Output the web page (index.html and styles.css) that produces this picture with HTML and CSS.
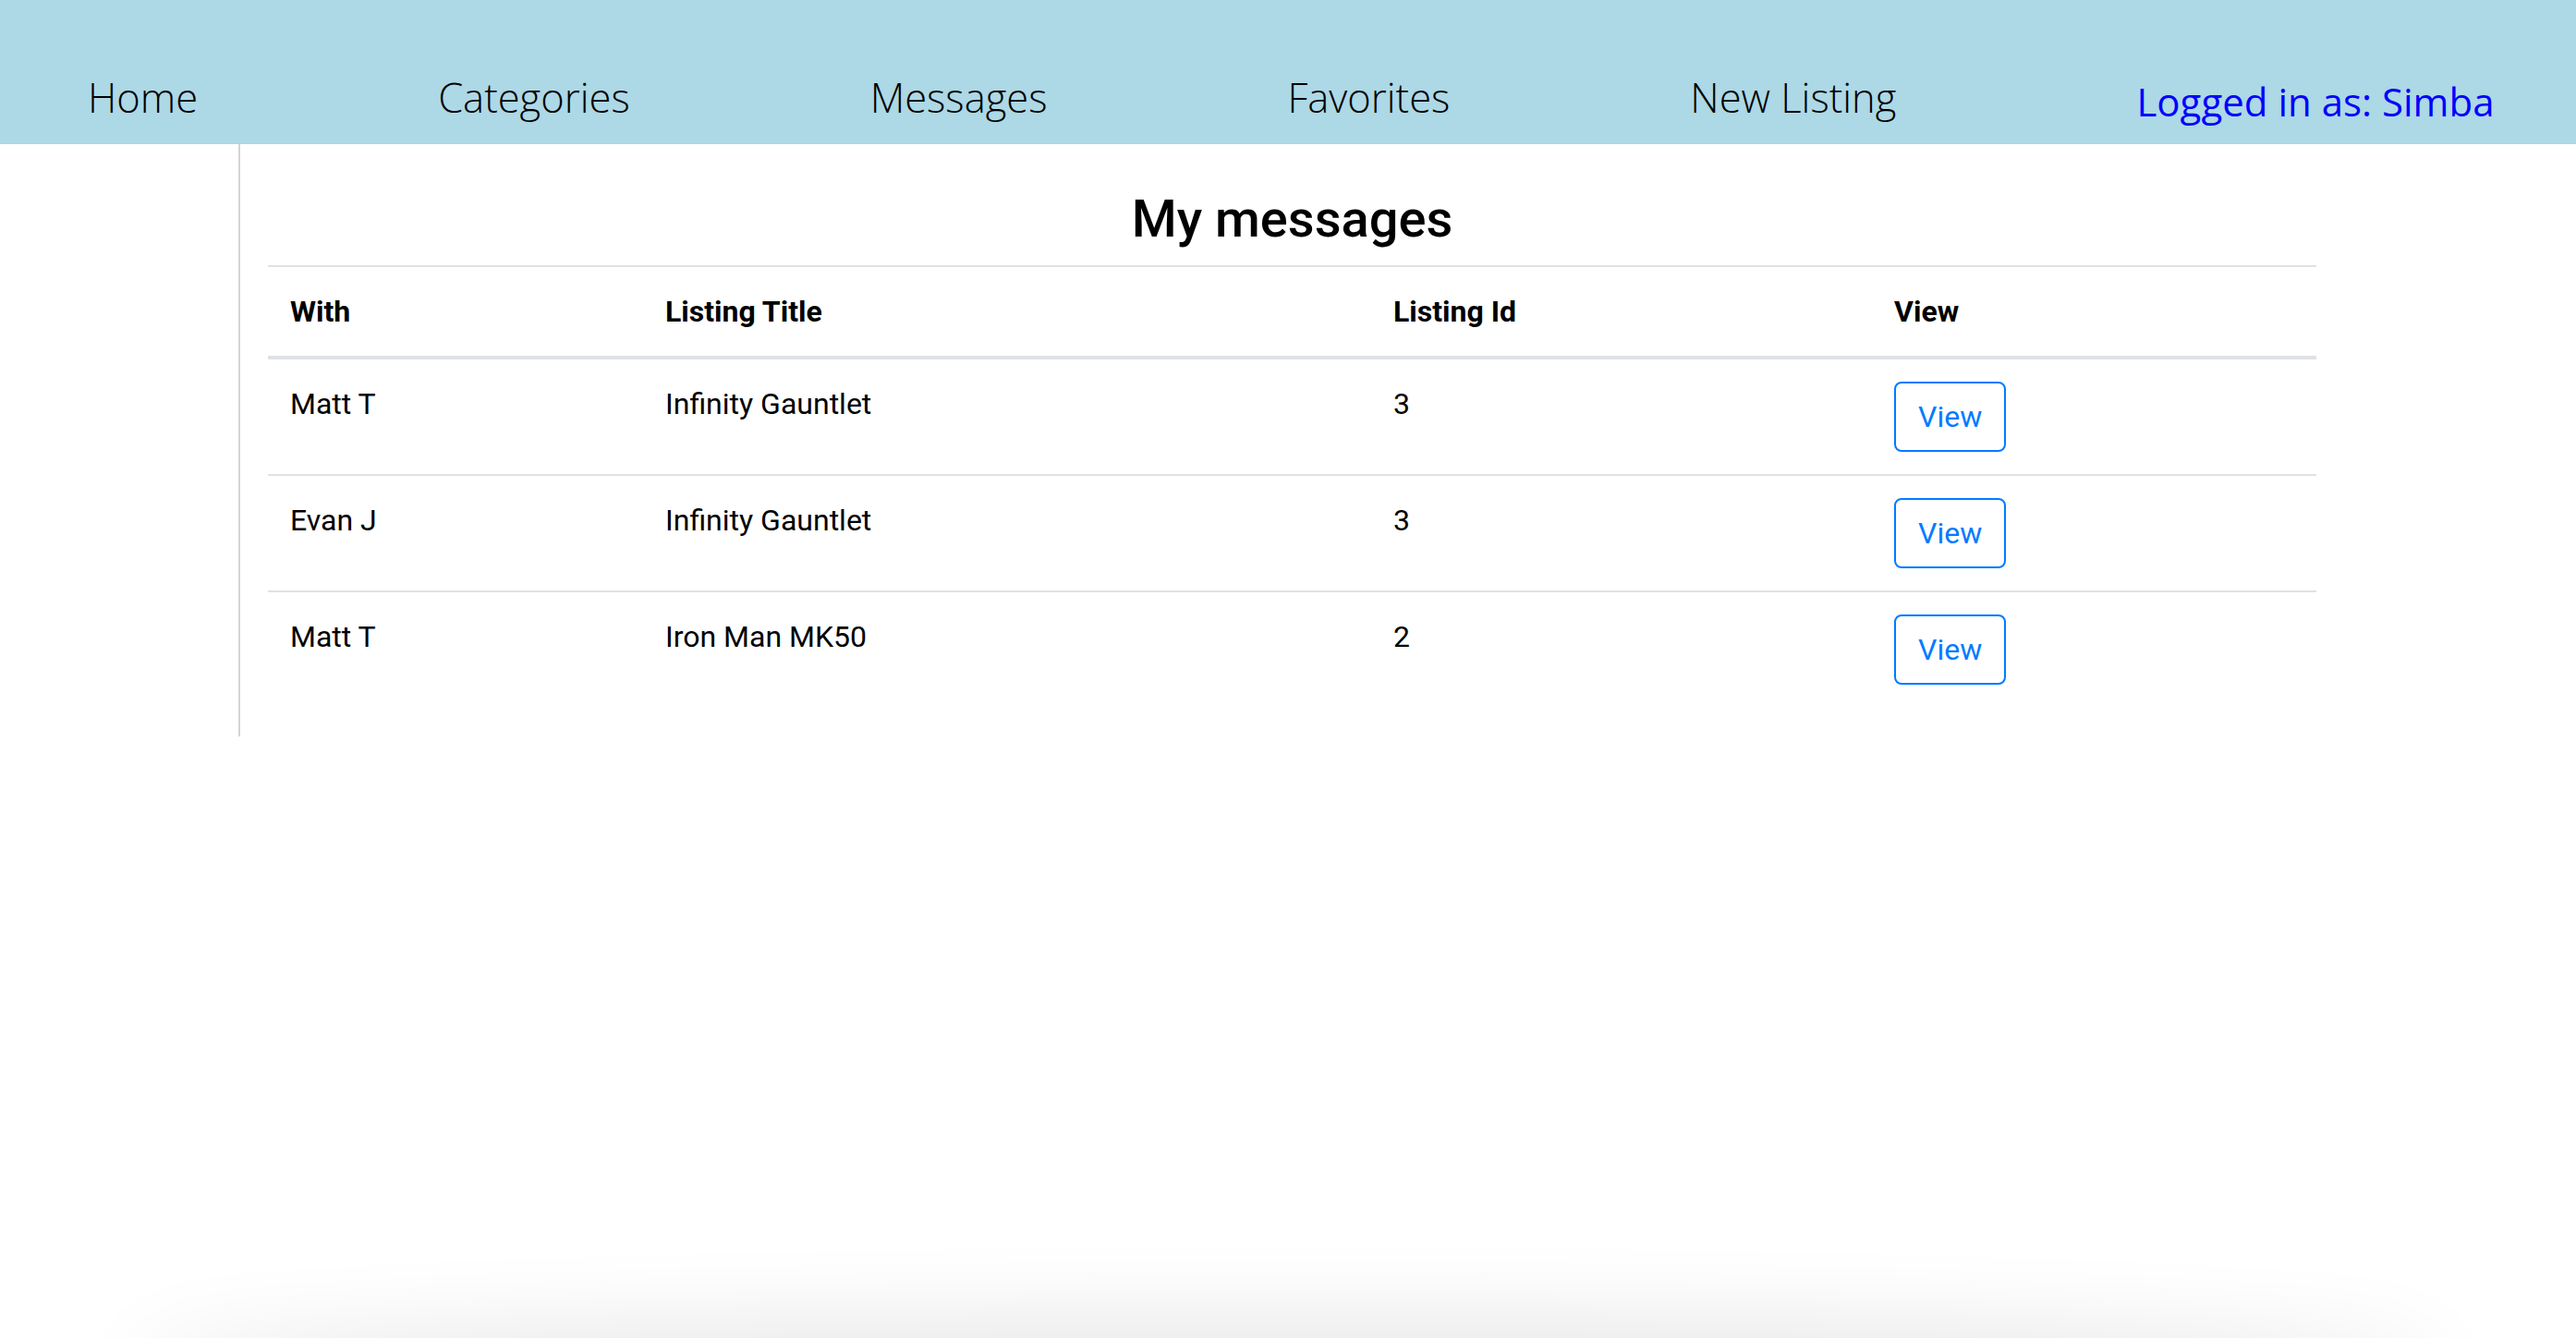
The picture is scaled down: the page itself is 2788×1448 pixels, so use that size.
FILE: index.html
```html
<!DOCTYPE html>
<html lang="en">
<head>
<meta charset="utf-8">
<title>My messages</title>
<link rel="stylesheet" href="styles.css">
</head>
<body>
<header class="navbar">
  <a class="nav-link" href="#">Home</a>
  <a class="nav-link" href="#">Categories</a>
  <a class="nav-link" href="#">Messages</a>
  <a class="nav-link" href="#">Favorites</a>
  <a class="nav-link" href="#">New Listing</a>
  <span class="user">Logged in as: Simba</span>
</header>
<div class="page">
  <aside class="sidebar"></aside>
  <main class="main">
    <h3 class="title">My messages</h3>
    <table class="table">
      <thead>
        <tr>
          <th class="col-with">With</th>
          <th class="col-title">Listing Title</th>
          <th class="col-id">Listing Id</th>
          <th class="col-view">View</th>
        </tr>
      </thead>
      <tbody>
        <tr>
          <td>Matt T</td>
          <td>Infinity Gauntlet</td>
          <td>3</td>
          <td><button class="btn-view" type="button">View</button></td>
        </tr>
        <tr>
          <td>Evan J</td>
          <td>Infinity Gauntlet</td>
          <td>3</td>
          <td><button class="btn-view" type="button">View</button></td>
        </tr>
        <tr>
          <td>Matt T</td>
          <td>Iron Man MK50</td>
          <td>2</td>
          <td><button class="btn-view" type="button">View</button></td>
        </tr>
      </tbody>
    </table>
  </main>
</div>
<div class="window-shadow"></div>
</body>
</html>
```
FILE: styles.css
```css
html, body {
  margin: 0;
  padding: 0;
  background: #ffffff;
}

body {
  font-family: Roboto, "Liberation Sans", sans-serif;
  color: #212529;
  overflow: hidden;
  height: 1448px;
}

.navbar {
  display: flex;
  align-items: flex-end;
  height: 156px;
  box-sizing: border-box;
  background: #add8e6;
  padding-left: 95px;
  gap: 260px;
}

.nav-link {
  font-family: "Open Sans", sans-serif;
  font-weight: 300;
  font-size: 43.5px;
  line-height: 1;
  color: #000000;
  text-decoration: none;
  margin-bottom: 29px;
  white-space: nowrap;
}

.user {
  font-family: "Open Sans", sans-serif;
  font-weight: 400;
  font-size: 42px;
  line-height: 1;
  color: #0000ff;
  margin-bottom: 25px;
  white-space: nowrap;
}

.page {
  display: flex;
  align-items: flex-start;
}

.sidebar {
  width: 258px;
  flex: none;
}

.main {
  border-left: 2px solid #d4d4d4;
  padding: 48px 30px 0 30px;
  width: 2217px;
  flex: none;
}

.title {
  margin: 0 0 16px 0;
  font-size: 56px;
  font-weight: 500;
  line-height: 1.2;
  text-align: center;
  color: #000000;
}

.table {
  width: 2217px;
  table-layout: fixed;
  border-collapse: collapse;
  margin-bottom: 32px;
  font-size: 32px;
  line-height: 48px;
}

.table th,
.table td {
  padding: 24px;
  text-align: left;
  vertical-align: top;
  border-top: 2px solid #dee2e6;
}

.table th {
  font-weight: 700;
  color: #000000;
  vertical-align: bottom;
  border-bottom: 4px solid #dee2e6;
}

.table td {
  color: #000000;
}

.col-with { width: 358px; }
.col-title { width: 740px; }
.col-id { width: 494px; }
.col-view { width: 433px; }

.btn-view {
  display: inline-block;
  font-family: Roboto, "Liberation Sans", sans-serif;
  font-size: 32px;
  line-height: 48px;
  font-weight: 400;
  color: #007bff;
  background: transparent;
  border: 2px solid #007bff;
  border-radius: 8px;
  padding: 12px 24px;
  margin: 0;
  cursor: pointer;
}

.window-shadow {
  position: fixed;
  left: 160px;
  right: 160px;
  bottom: -60px;
  height: 60px;
  border-radius: 50%;
  box-shadow: 0 0 90px 20px rgba(0, 0, 0, 0.1);
  pointer-events: none;
}
```
